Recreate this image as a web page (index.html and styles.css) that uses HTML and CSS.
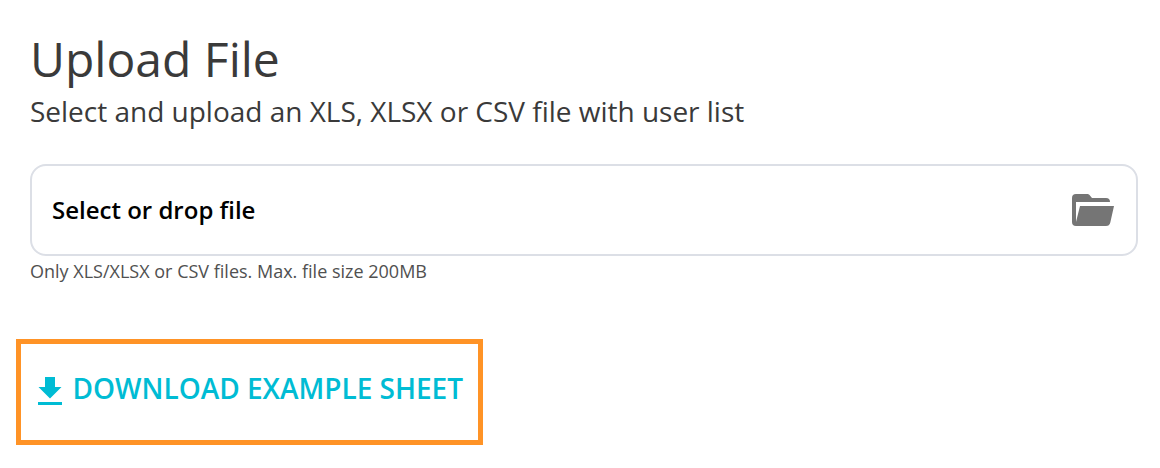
FILE: index.html
```html
<!DOCTYPE html>
<html lang="en">
<head>
<meta charset="utf-8">
<title>Upload File</title>
<link rel="stylesheet" href="styles.css">
</head>
<body>
<main class="page">
  <h1 class="title">Upload File</h1>
  <p class="subtitle">Select and upload an XLS, XLSX or CSV file with user list</p>
  <div class="dropzone">
    <span class="dropzone-label">Select or drop file</span>
    <svg class="folder" width="42" height="32" viewBox="0 0 42 32">
      <path fill="#757575" d="M4 0H15.500Q16.500 0 17.300 .8L20 4H34Q38 4 38 8H4V28L8 12H42L38.300 28.500Q37.500 32 34 32H4Q0 32 0 28V4Q0 0 4 0Z"/>
    </svg>
  </div>
  <p class="hint">Only XLS/XLSX or CSV files. Max. file size 200MB</p>
  <a class="download">
    <svg class="arrow" width="24" height="28" viewBox="0 0 24 28">
      <path fill="#00bcd4" d="M7 0H17V10H23.500L12 21.500L.5 10H7ZM0 25H24V28H0Z"/>
    </svg>
    <span class="download-label">DOWNLOAD EXAMPLE SHEET</span>
  </a>
</main>
</body>
</html>
```
FILE: styles.css
```css
* { box-sizing: border-box; }
body { margin: 0; background: #fff; font-family: "Open Sans", sans-serif; color: #3a3a3a; }
.page { padding: 26px 22px 0 30px; }
.title { margin: 0; font-size: 48px; line-height: 66px; font-weight: 400; }
.subtitle { margin: 0; font-size: 28px; line-height: 38px; letter-spacing: -0.01px; white-space: nowrap; }
.dropzone { display: flex; align-items: center; justify-content: space-between; height: 92px; margin-top: 34px; padding: 0 22px 0 20px; border: 2px solid #dcdfe6; border-radius: 16px; }
.dropzone-label { padding-bottom: 2px; font-size: 24px; font-weight: 600; color: #000; }
.hint { margin: 2px 0 0; font-size: 18px; line-height: 26px; color: #505050; }
.download { display: flex; width: 467px; height: 106px; margin: 55px 0 0 -14px; padding: 30px 0 0 17px; border: 5px solid #ff9326; color: #00bcd4; }
.arrow { margin-top: 3px; }
.download-label { margin-left: 10.500px; font-size: 28px; line-height: 28px; font-weight: 600; letter-spacing: -0.01px; white-space: nowrap; }
```
